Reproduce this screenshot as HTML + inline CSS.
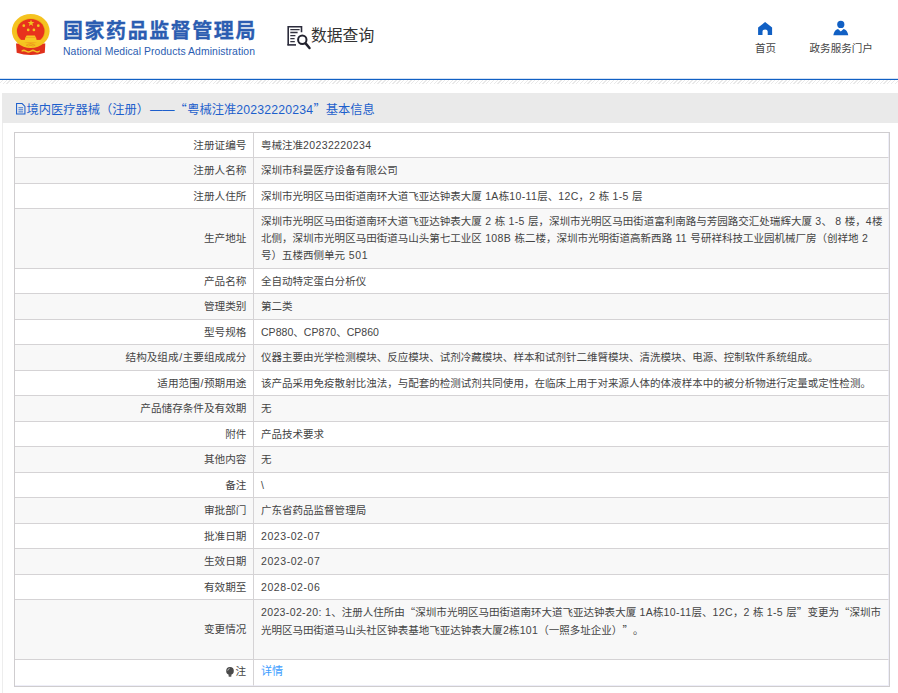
<!DOCTYPE html>
<html lang="zh-CN">
<head>
<meta charset="utf-8">
<title>数据查询</title>
<style>
*{box-sizing:border-box;margin:0;padding:0}
html,body{width:898px;height:693px;overflow:hidden;background:#fff}
body{position:relative;text-spacing-trim:space-all;font-family:"Liberation Sans","Noto Sans CJK SC",sans-serif;color:#333;font-size:11.9px}
.abs{position:absolute}
/* header */
#logo-cn{left:63px;top:17px;font-size:20px;font-weight:700;color:#2b5db1;line-height:28px;white-space:nowrap;letter-spacing:1.55px;-webkit-text-stroke:.3px #2b5db1}
#logo-en{left:63px;top:45px;font-size:10.4px;color:#2b5db1;line-height:14px;white-space:nowrap;letter-spacing:.08px}
#q-txt{left:311px;top:24px;font-size:15.8px;line-height:24px;color:#333;white-space:nowrap}
.nav{text-align:center;font-size:10.55px;line-height:14px;color:#444;white-space:nowrap}
#nav1{left:745.6px;top:41px;width:40px}
#nav2{left:801.2px;top:41px;width:80px}
#blue{left:0;top:78px;width:898px;height:2px;background:linear-gradient(#d3e1f4 0,#d3e1f4 1px,#1160c4 1px,#1160c4 2px)}
#hatch{left:0;top:80px;width:898px;height:4px;background:repeating-linear-gradient(135deg,#fff 0,#fff 1.7px,#e9e9e9 1.7px,#e9e9e9 2.65px)}
/* content */
#wrap{left:2px;top:93px;width:900px;height:620px;border-left:1px solid #ededed}
#bar{left:2px;top:93px;width:896px;height:29.5px;background:#eaeaea}
#bar-txt{left:26.5px;top:99.5px;line-height:18px;font-size:12.25px;color:#1d5fcc;white-space:nowrap}
#t2{margin-left:1px}#t3{margin-left:0}#t4{margin-left:.4px}#t5{letter-spacing:.21px}#t7{margin-left:0}
#bar-ico{left:16px;top:103px;width:9.5px;height:11.5px}
table{position:absolute;left:14px;top:132px;width:876px;border-collapse:separate;border-spacing:0;border:1px solid #cfcdcf;table-layout:fixed}
td{border-bottom:1px solid #d5d3d5;padding:0 7px;line-height:17px;vertical-align:middle;font-size:10.53px;color:#444}
td.k{width:239px;text-align:right;border-right:1px solid #d5d3d5;white-space:nowrap;font-size:10.62px;padding-right:6.6px}
td.v{white-space:nowrap;border-right:1px solid #eeeef8}
tr.g td{background:#f8f8f8}
tr:last-child td{border-bottom:1px solid #eeeef8}
a{color:#409eff;text-decoration:none;font-size:11.1px}
tr:last-child td{padding-bottom:1.5px}
tr:last-child td.k{padding-right:7px}
.n{letter-spacing:.36px}
.q{font-family:"Noto Sans CJK SC",sans-serif}
.sl{margin:0 .6px}
.bulb{vertical-align:-1.5px;margin-right:1.5px}
</style>
</head>
<body>
<!-- header -->
<svg id="hdr-svg" class="abs" style="left:0;top:0" width="898" height="78" viewBox="0 0 898 78">
  <!-- national emblem -->
  <path d="M16 43.4 L45.3 43.4 L44.8 52.8 Q30.7 57.4 16.7 52.8 Z" fill="#e0301c"/>
  <path d="M21.6 50.2 Q24 48.8 26.2 50.4 Q28.4 52 30.7 50.4 Q33 48.8 35.2 50.4 Q37.4 52 39.8 50.2 L39.8 51.8 Q37.4 53.6 35.2 52 Q33 50.4 30.7 52 Q28.4 53.6 26.2 52 Q24 50.4 21.6 51.8 Z" fill="#f2c226"/>
  <ellipse cx="30.75" cy="31.05" rx="18.85" ry="17" fill="#f5c320"/>
  <ellipse cx="30.75" cy="31.05" rx="14.5" ry="12.9" fill="#eeb214"/>
  <ellipse cx="30.7" cy="31.05" rx="13.75" ry="12.15" fill="#e8321d"/>
  <path d="M18.6 39.6 Q30.7 48 42.8 39.6 L42.8 43 Q30.7 49 18.6 43 Z" fill="#f5c320"/>
  <path d="M26.2 45.2 Q28.4 43.6 30.7 45.2 Q33 43.6 35.2 45.2 Q33 46.9 30.7 45.3 Q28.4 46.9 26.2 45.2 Z" fill="none" stroke="#e8901c" stroke-width=".7"/>
  <rect x="19.7" y="39.9" width="22.2" height="2.9" fill="#f6c722"/>
  <path d="M24.8 39.9 L25.4 37.2 L36 37.2 L36.6 39.9 Z" fill="#f6c722"/>
  <path d="M25.6 37.2 L26.6 35.5 L34.8 35.5 L35.8 37.2 Z" fill="#f6c722"/>
  <polygon points="31,19.5 31.85,22 34.4,22 32.35,23.55 33.1,26 31,24.5 28.9,26 29.65,23.55 27.6,22 30.15,22" fill="#f0c81e"/>
  <circle cx="23.8" cy="25.7" r="1.35" fill="#f0c81e"/><circle cx="38.3" cy="25.7" r="1.35" fill="#f0c81e"/>
  <circle cx="28.2" cy="29.9" r="1.35" fill="#f0c81e"/><circle cx="33.9" cy="29.9" r="1.35" fill="#f0c81e"/>
  <!-- query icon -->
  <path d="M288.2 45.3 V26.7 H301.5 V32.2" fill="none" stroke="#2b2b3b" stroke-width="1.6"/>
  <path d="M287.4 44.9 H296" fill="none" stroke="#2b2b3b" stroke-width="1.6"/>
  <path d="M290.3 29.6 H299.6 M290.3 32.5 H297.6 M290.3 35.6 H295.4 M290.3 38.6 H294.6 M290.3 41.7 H294.8" stroke="#33333f" stroke-width="1.3"/>
  <circle cx="302.3" cy="39.7" r="4.2" fill="#fff" stroke="#23232f" stroke-width="2"/>
  <path d="M305.6 43.4 L309.5 48" stroke="#23232f" stroke-width="2.5" stroke-linecap="round"/>
  <!-- home icon -->
  <path d="M765.1 22 L772.1 27.6 V34.9 H767.7 V31.6 Q767.7 29.5 765.1 29.5 Q762.5 29.5 762.5 31.6 V34.9 H758.1 V27.6 Z" fill="#1160c4"/>
  <!-- user icon -->
  <circle cx="840.8" cy="24.4" r="3.6" fill="#1160c4"/>
  <path d="M833.3 35.3 Q834.2 29.8 838 28.9 L840.8 31.6 L843.6 28.9 Q847.4 29.8 848.3 35.3 Z" fill="#1160c4"/>
</svg>
<div id="logo-cn" class="abs">国家药品监督管理局</div>
<div id="logo-en" class="abs">National Medical Products Administration</div>
<div id="q-txt" class="abs">数据查询</div>

<div id="nav1" class="abs nav">首页</div>
<div id="nav2" class="abs nav">政务服务门户</div>
<div id="blue" class="abs"></div>
<div id="hatch" class="abs"></div>

<!-- content -->
<div id="wrap" class="abs"></div>
<div id="bar" class="abs"></div>
<svg id="bar-ico" class="abs" viewBox="0 0 9 11">
  <path d="M0.5 0.5 H5.8 L8.5 3.2 V10.5 H0.5 Z" fill="none" stroke="#1d5fcc" stroke-width="1"/>
  <path d="M2.3 4.5 H6.7 M2.3 6.5 H6.7 M2.3 8.5 H6.7" stroke="#1d5fcc" stroke-width="0.8"/>
</svg>
<div id="bar-txt" class="abs"><span id="t1">境内医疗器械（注册）</span><span id="t2">——</span><span id="t3" class="q">“</span><span id="t4">粤械注准</span><span id="t5">20232220234</span><span id="t6" class="q">”</span><span id="t7">基本信息</span></div>

<table>
<tr style="height:25px"><td class="k">注册证编号</td><td class="v"><span class="ln" id="r0_0">粤械注准<span class="n">20232220234</span></span></td></tr>
<tr class="g" style="height:26px"><td class="k">注册人名称</td><td class="v"><span class="ln" id="r1_0">深圳市科曼医疗设备有限公司</span></td></tr>
<tr style="height:25px"><td class="k">注册人住所</td><td class="v"><span class="ln" id="r2_0">深圳市光明区马田街道南环大道飞亚达钟表大厦<span class="n"> 1A</span>栋<span class="n">10-11</span>层、<span class="n">12C</span>，<span class="n">2 </span>栋<span class="n"> 1-5 </span>层</span></td></tr>
<tr class="g" style="height:60px"><td class="k">生产地址</td><td class="v"><span class="ln" id="r3_0">深圳市光明区马田街道南环大道飞亚达钟表大厦<span class="n"> 2 </span>栋<span class="n"> 1-5 </span>层，深圳市光明区马田街道富利南路与芳园路交汇处瑞辉大厦<span class="n"> 3</span>、<span class="n"> 8 </span>楼，<span class="n">4</span>楼</span><br><span class="ln" id="r3_1">北侧，深圳市光明区马田街道马山头第七工业区<span class="n"> 108B </span>栋二楼，深圳市光明街道高新西路<span class="n"> 11 </span>号研祥科技工业园机械厂房（创祥地<span class="n"> 2</span></span><br><span class="ln" id="r3_2">号）五楼西侧单元<span class="n" style="letter-spacing:0.7px"> 501</span></span></td></tr>
<tr style="height:25px"><td class="k">产品名称</td><td class="v"><span class="ln" id="r4_0">全自动特定蛋白分析仪</span></td></tr>
<tr class="g" style="height:26px"><td class="k">管理类别</td><td class="v"><span class="ln" id="r5_0">第二类</span></td></tr>
<tr style="height:25px"><td class="k">型号规格</td><td class="v"><span class="ln" id="r6_0"><span class="n" style="letter-spacing:0.03px">CP880</span>、<span class="n" style="letter-spacing:0.03px">CP870</span>、<span class="n" style="letter-spacing:0.03px">CP860</span></span></td></tr>
<tr class="g" style="height:26px"><td class="k">结构及组成<span class="sl">/</span>主要组成成分</td><td class="v"><span class="ln" id="r7_0">仪器主要由光学检测模块、反应模块、试剂冷藏模块、样本和试剂针二维臂模块、清洗模块、电源、控制软件系统组成。</span></td></tr>
<tr style="height:25px"><td class="k">适用范围<span class="sl">/</span>预期用途</td><td class="v"><span class="ln" id="r8_0">该产品采用免疫散射比浊法，与配套的检测试剂共同使用，在临床上用于对来源人体的体液样本中的被分析物进行定量或定性检测。</span></td></tr>
<tr class="g" style="height:26px"><td class="k">产品储存条件及有效期</td><td class="v"><span class="ln" id="r9_0">无</span></td></tr>
<tr style="height:25px"><td class="k">附件</td><td class="v"><span class="ln" id="r10_0">产品技术要求</span></td></tr>
<tr class="g" style="height:26px"><td class="k">其他内容</td><td class="v"><span class="ln" id="r11_0">无</span></td></tr>
<tr style="height:25px"><td class="k">备注</td><td class="v"><span class="ln" id="r12_0"><span class="n">\</span></span></td></tr>
<tr class="g" style="height:26px"><td class="k">审批部门</td><td class="v"><span class="ln" id="r13_0">广东省药品监督管理局</span></td></tr>
<tr style="height:25px"><td class="k">批准日期</td><td class="v"><span class="ln" id="r14_0"><span class="n" style="letter-spacing:0.56px">2023-02-07</span></span></td></tr>
<tr class="g" style="height:26px"><td class="k">生效日期</td><td class="v"><span class="ln" id="r15_0"><span class="n" style="letter-spacing:0.56px">2023-02-07</span></span></td></tr>
<tr style="height:25px"><td class="k">有效期至</td><td class="v"><span class="ln" id="r16_0"><span class="n" style="letter-spacing:0.56px">2028-02-06</span></span></td></tr>
<tr class="g" style="height:60px"><td class="k">变更情况</td><td class="v"><span class="ln" id="r17_0"><span class="n">2023-02-20: 1</span>、注册人住所由<span class="q">“</span>深圳市光明区马田街道南环大道飞亚达钟表大厦<span class="n"> 1A</span>栋<span class="n">10-11</span>层、<span class="n">12C</span>，<span class="n">2 </span>栋<span class="n"> 1-5 </span>层<span class="q">”</span>变更为<span class="q">“</span>深圳市</span><br><span class="ln" id="r17_1">光明区马田街道马山头社区钟表基地飞亚达钟表大厦<span class="n">2</span>栋<span class="n">101</span>（一照多址企业）<span class="q">”</span>。</span><br><span class="ln" id="r17_2">&nbsp;</span></td></tr>
<tr style="height:26px"><td class="k"><svg class="bulb" width="8" height="10" viewBox="0 0 8 10"><circle cx="4" cy="3.9" r="3.8" fill="#4a4a4a"/><path d="M2.6 7 H5.4 V9.4 Q4 10.2 2.6 9.4 Z" fill="#555"/><path d="M1.7 3.6 Q1.9 1.9 3.6 1.6" stroke="#ddd" stroke-width=".8" fill="none"/></svg>注</td><td class="v"><span class="ln" id="r18_0"><a>详情</a></span></td></tr>
</table>
</body>
</html>
